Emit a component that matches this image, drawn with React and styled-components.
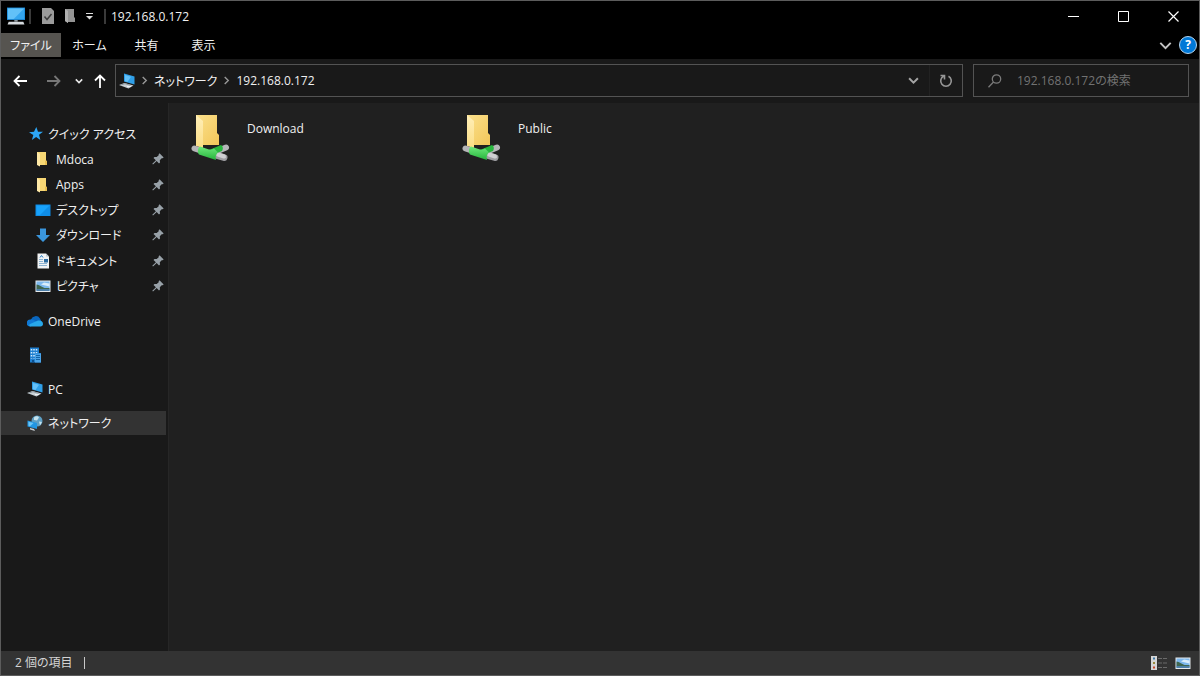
import React from 'react';
import styled, { createGlobalStyle } from 'styled-components';

const pinned = [
  { name: 'Mdoca', icon: 'folder' },
  { name: 'Apps', icon: 'folder' },
  { name: 'デスクトップ', icon: 'desktop' },
  { name: 'ダウンロード', icon: 'download' },
  { name: 'ドキュメント', icon: 'document' },
  { name: 'ピクチャ', icon: 'picture' },
];

const places = [
  { name: 'OneDrive', icon: 'cloud' },
  { name: '', label: '組織', icon: 'building' },
  { name: 'PC', icon: 'pc' },
  { name: 'ネットワーク', icon: 'network', selected: true },
];

const shares = ['Download', 'Public'];

const drawings = {
  folder: (
    <>
      <path d="M2 1h9v8.500l1 .5v4H2z" fill="#f7d774" />
      <path d="M10 9.500l2 .5v4h-2z" fill="#e9bf50" />
      <path d="M2 1l3 2v12.500L2 14z" fill="#ffe9a6" />
    </>
  ),
  desktop: (
    <>
      <path d="M.5 2.500h15v11.500H.5z" fill="#0f8de6" />
      <path d="M1.500 3.500h13L5 13H1.500z" fill="#18a2fb" />
    </>
  ),
  download: <path d="M5 1.500h6V8h4l-7 7-7-7h4z" fill="#3a96dd" />,
  document: (
    <>
      <path d="M2.500.5H11l3 3v12H2.500z" fill="#f1f3f4" />
      <path d="M11 .5v3h3z" fill="#b9c4cc" />
      <path d="M4 6.500h4M4 8.500h4M4 10.500h8M4 12.500h8" stroke="#8eb4d2" />
      <path d="M5 4.500l1.500-2 1.500 2" stroke="#1f7ac4" fill="none" />
      <path d="M9 6h4v3.500H9z" fill="#2b6da3" />
    </>
  ),
  picture: (
    <>
      <path d="M.5 2.500h15v11.500H.5z" fill="#e6eaed" />
      <path d="M1.500 3.500h13V13h-13z" fill="#7db8ee" />
      <path d="M6 6.500l3-2 5.500 1v3z" fill="#d9ecfb" />
      <path d="M1.500 6.500c3 0 5 2.500 8 3.500h5v1.500h-13z" fill="#3f6650" />
      <path d="M1.500 11h13v2h-13z" fill="#4d7fa8" />
    </>
  ),
  cloud: (
    <>
      <path d="M4 6.500a5 5 0 0 1 9-1l2 4.500H3z" fill="#0a66bd" />
      <path d="M3 13.500a3.500 3.500 0 0 1 .5-7c3-.5 5 1.500 8.500 4z" fill="#0f78d4" />
      <path d="M3 13.500c-1-.5-1-2 0-2.500l8-3.500c3-.5 5 1 5 3.500 0 1.500-1 2.500-2.500 2.500z" fill="#28a8ea" />
    </>
  ),
  building: (
    <>
      <path d="M3 .5h9V6h2v9.500H3z" fill="#1f7fd0" />
      <path d="M8 6.500h6v9H8z" fill="#4aa3e8" />
      <path d="M4.500 2v9.500M7 2v9.500M9.500 2v4" stroke="#d3ebfc" strokeWidth="1.500" strokeDasharray="1.500 1.500" />
      <path d="M9 8.500h4M9 10.500h4M9 12.500h4" stroke="#1362a6" />
      <path d="M5 13h2v2.500H5z" fill="#0d4f8c" />
    </>
  ),
  pc: (
    <>
      <path d="M5 .5L15.500 3.500v8L5 8.500z" fill="#2f9fe8" />
      <path d="M6 2l6 1.700L8.500 9 6 8.200z" fill="#63c0f8" />
      <path d="M0 12l5.500-2 9 2.500-5 3z" fill="#c9d1d6" />
      <path d="M2 12l4-1.300 5.500 1.600" stroke="#8b969d" fill="none" />
      <path d="M8 13.500h4" stroke="#eef1f3" />
    </>
  ),
  network: (
    <>
      <circle cx="10" cy="6" r="5.500" fill="#5e9fc4" />
      <path d="M7 2.500c2-2 4-1.500 5 0L10 5.500 7 5zM12 6.500l3 .5-2 3.500z" fill="#c6e3ee" />
      <path d="M.5 5.500l9.500 2.500v6L.5 11.500z" fill="#2196e3" />
      <path d="M1.500 6.700l5 1.300L3 11.300l-1.500-.5z" fill="#6ac6fa" />
      <path d="M3 13l4 1 1 2-5-1.500z" fill="#c6ced3" />
    </>
  ),
  monitor: (
    <>
      <path d="M0 .5h16v11H0z" fill="#1c8ede" />
      <path d="M.8 1.300h14.400v9.400H.8z" fill="#34a5ee" />
      <path d="M.8 1.300h14.400L6 10.700H.8z" fill="#62c1f8" />
      <path d="M6.500 11.500h3v1.500h-3z" fill="#8c979e" />
      <path d="M1.500 13h13l1 2.500H.5z" fill="#d5dade" />
    </>
  ),
};

const Icon = ({ name, size = 16 }) => (
  <svg width={size} height={size} viewBox="0 0 16 16" aria-hidden="true">
    {drawings[name]}
  </svg>
);

const Star = () => (
  <svg width="14" height="14" viewBox="0 0 14 14" aria-hidden="true">
    <path d="M7.300 0l1.700 4.700 5 .1-4 3 1.400 5.200-4.300-2.900-4.200 2.900 1.400-4.900L0 5.200l5-.4z" fill="#2da6f5" />
  </svg>
);

const Pin = () => (
  <svg width="12" height="12" viewBox="0 0 12 12" aria-hidden="true">
    <path d="M7.500.3l4.200 4.200-1.200.8-.8-.1-1.900 2 .2 2.200-1 1-2.300-2.400L1 11.500l-.7-.7 3.600-3.600L1.500 5l1-1.100 2.200.2 2-1.900-.1-.8z" fill="#98a1a8" />
  </svg>
);

const Chevron = ({ size = 10, right = false, color = '#9a9a9a', weight = 1.500 }) => (
  <svg width={size} height={size} viewBox="0 0 10 10" fill="none" stroke={color} strokeWidth={weight} aria-hidden="true">
    <path d={right ? 'M3 1l4 4-4 4' : 'M1 3l4 4 4-4'} />
  </svg>
);

const Arrow = ({ d, color = '#fff' }) => (
  <svg width="14" height="14" viewBox="0 0 14 14" fill="none" stroke={color} strokeWidth="1.800" aria-hidden="true">
    <path d={d} />
  </svg>
);

const SharedFolder = () => (
  <svg width="40" height="48" viewBox="0 0 40 48" aria-hidden="true">
    <defs>
      <linearGradient id="back" x1="0" y1="0" x2="1" y2="1">
        <stop offset="0" stopColor="#fbe08c" />
        <stop offset="1" stopColor="#f2c75a" />
      </linearGradient>
      <linearGradient id="front" x1="0" y1="0" x2="0" y2="1">
        <stop offset="0" stopColor="#ffefb8" />
        <stop offset="1" stopColor="#fbdd85" />
      </linearGradient>
      <linearGradient id="cable" x1="0" y1="0" x2="0" y2="1">
        <stop offset="0" stopColor="#6fe97c" />
        <stop offset="1" stopColor="#25b43c" />
      </linearGradient>
    </defs>
    <path d="M5 0h21v18l2 2v10H5z" fill="url(#back)" />
    <path d="M5 0l7 6v27l-7-2z" fill="url(#front)" />
    <g strokeLinecap="round" fill="none">
      <path d="M35 32.500l-6 2.500" stroke="#b5b5b8" strokeWidth="6" />
      <path d="M3.500 33.500l6 2" stroke="#b5b5b8" strokeWidth="6" />
      <path d="M33 42.500l-7-2" stroke="#9e9ea2" strokeWidth="7" />
      <path d="M33 41.500l-6-2" stroke="#cfcfd2" strokeWidth="4" />
    </g>
    <path d="M18 35l12-5c2 1 2.500 4 1 6l-10 4z" fill="#27b63d" />
    <path d="M9 31.500l9 3c2 .5 4-.5 5-1l4 4c-2 2-3 4-2 7.500L8 39.500c-2-2.500-1-7 1-8z" fill="url(#cable)" />
  </svg>
);

const App = () => {
  return (
    <Window>
      <GlobalStyle />
      <TitleBar>
        <QuickTools>
          <Icon name="monitor" size={18} />
          <Bar />
          <ToolButton aria-label="プロパティ">
            <svg width="12" height="16" viewBox="0 0 12 16" aria-hidden="true">
              <path d="M0 0h9l3 3v13H0z" fill="#9b9b9b" />
              <path d="M2.500 8.500l2.500 3L9.500 6" stroke="#3e3e3e" strokeWidth="1.500" fill="none" />
            </svg>
          </ToolButton>
          <ToolButton aria-label="新しいフォルダー">
            <svg width="10" height="14" viewBox="0 0 10 14" aria-hidden="true">
              <path d="M0 0h9v8l1 1v4H3v1L0 12z" fill="#949494" />
              <path d="M0 0l3 2v12l-3-2z" fill="#b0b0b0" />
            </svg>
          </ToolButton>
          <ToolButton aria-label="カスタマイズ">
            <svg width="7" height="7" viewBox="0 0 7 7" aria-hidden="true">
              <path d="M0 .5h7" stroke="#ddd" />
              <path d="M0 3h7L3.500 6.500z" fill="#ddd" />
            </svg>
          </ToolButton>
          <Bar />
        </QuickTools>
        <Title>192.168.0.172</Title>
        <CaptionButton aria-label="最小化">
          <svg width="11" height="11" viewBox="0 0 11 11" aria-hidden="true">
            <path d="M0 5.500h11" stroke="#fff" />
          </svg>
        </CaptionButton>
        <CaptionButton aria-label="最大化">
          <svg width="11" height="11" viewBox="0 0 11 11" aria-hidden="true">
            <path d="M.5.5h10v10H.5z" stroke="#fff" fill="none" />
          </svg>
        </CaptionButton>
        <CaptionButton aria-label="閉じる">
          <svg width="11" height="11" viewBox="0 0 11 11" aria-hidden="true">
            <path d="M.5.5l10 10M10.500.5l-10 10" stroke="#fff" strokeWidth="1.200" />
          </svg>
        </CaptionButton>
      </TitleBar>

      <Ribbon>
        <Tab $active>ファイル</Tab>
        <Tab>ホーム</Tab>
        <Tab>共有</Tab>
        <Tab>表示</Tab>
        <RibbonEnd>
          <ToolButton aria-label="リボンの展開">
            <Chevron size={13} color="#c4c4c4" />
          </ToolButton>
          <HelpButton aria-label="ヘルプ">?</HelpButton>
        </RibbonEnd>
      </Ribbon>

      <NavBar>
        <NavButtons>
          <ToolButton aria-label="戻る"><Arrow d="M14 7H1.500M6.500 2L1.500 7l5 5" /></ToolButton>
          <ToolButton aria-label="進む"><Arrow d="M0 7h12.500M7.500 2l5 5-5 5" color="#777" /></ToolButton>
          <ToolButton aria-label="最近の場所"><Chevron size={8} color="#e8e8e8" weight={2} /></ToolButton>
          <ToolButton aria-label="上へ"><Arrow d="M7 14V1.500M2 6.500l5-5 5 5" /></ToolButton>
        </NavButtons>
        <Address>
          <Icon name="pc" />
          <Chevron size={9} right />
          <Crumb>ネットワーク</Crumb>
          <Chevron size={9} right />
          <Crumb>192.168.0.172</Crumb>
          <AddressEnd>
            <AddressButton aria-label="以前の場所"><Chevron size={11} color="#a4a4a4" weight={1.800} /></AddressButton>
            <AddressButton $divided aria-label="最新の情報に更新">
              <svg width="14" height="14" viewBox="0 0 14 14" fill="none" stroke="#969696" strokeWidth="1.600" aria-hidden="true">
                <path d="M9.500 2.300a5.300 5.300 0 1 1-5 0M1.500 1.500h4v4" />
              </svg>
            </AddressButton>
          </AddressEnd>
        </Address>
        <Search>
          <svg width="14" height="14" viewBox="0 0 14 14" fill="none" stroke="#7a7a7a" strokeWidth="1.300" aria-hidden="true">
            <circle cx="8.500" cy="5" r="4.200" />
            <path d="M5.500 8L.5 13.300" />
          </svg>
          <SearchInput type="text" aria-label="検索" placeholder="192.168.0.172の検索" />
        </Search>
      </NavBar>

      <Body>
        <Sidebar>
          <QuickAccess>
            <Place href="#">
              <Star />
              <PlaceName>クイック アクセス</PlaceName>
            </Place>
            {pinned.map(({ name, icon }) => (
              <Place href="#" key={name} $nested>
                <Icon name={icon} />
                <PlaceName>{name}</PlaceName>
                <Pin />
              </Place>
            ))}
          </QuickAccess>
          {places.map(({ name, label, icon, selected }) => (
            <Place href="#" key={icon} aria-label={label} $selected={selected} $root>
              <Icon name={icon} />
              <PlaceName>{name}</PlaceName>
            </Place>
          ))}
        </Sidebar>
        <Content>
          {shares.map((name) => (
            <Share key={name}>
              <SharedFolder />
              <span>{name}</span>
            </Share>
          ))}
        </Content>
      </Body>

      <StatusBar>
        <Count>2 個の項目</Count>
        <ToolButton aria-label="詳細">
          <svg width="16" height="14" viewBox="0 0 16 14" aria-hidden="true">
            <path d="M0 0h6v14H0z" fill="#d6d6d6" />
            <path d="M2 2.500h2" stroke="#3c78a8" strokeWidth="2" />
            <path d="M2 7h2" stroke="#9a8a3c" strokeWidth="2" />
            <path d="M2 11.500h2" stroke="#c9472b" strokeWidth="2" />
            <path d="M7 2.500h9M7 7h9M7 11.500h9" stroke="#6b6b6b" strokeDasharray="4 1" />
          </svg>
        </ToolButton>
        <ToolButton aria-label="大アイコン"><Icon name="picture" /></ToolButton>
      </StatusBar>
    </Window>
  );
};

const GlobalStyle = createGlobalStyle`
  * {
    box-sizing: border-box;
  }
  body {
    margin: 0;
    background: #000;
  }
  body, button, input {
    font-family: 'Open Sans', 'Noto Sans CJK JP', sans-serif;
    font-size: 12px;
    font-feature-settings: 'palt';
  }
  svg {
    flex: none;
    display: block;
  }
  button {
    border: 0;
    padding: 0;
    background: none;
    color: inherit;
  }
`;

const Window = styled.div`
  display: flex;
  flex-direction: column;
  min-height: 100vh;
  border: 1px solid #5c5c5c;
  background: #191919;
  color: #f0f0f0;
`;

const TitleBar = styled.header`
  display: flex;
  align-items: center;
  height: 32px;
  padding: 0 1px 2px 0;
  background: #000;
`;

const QuickTools = styled.div`
  display: flex;
  align-items: center;
  gap: 11px;
  padding-left: 6px;

  svg:first-child + span {
    margin-left: -7px;
  }
`;

const Bar = styled.span`
  width: 2px;
  height: 15px;
  background: #3a3a3a;
`;

const Title = styled.h1`
  flex: 1;
  margin: 0;
  padding-left: 5px;
  font-size: 12px;
  font-weight: 400;
`;

const ToolButton = styled.button`
  display: flex;
  align-items: center;
  justify-content: center;
`;

const CaptionButton = styled(ToolButton)`
  width: 50px;
  height: 30px;
`;

const Ribbon = styled.div`
  display: flex;
  height: 26px;
  padding-bottom: 2px;
  background: #000;
`;

const Tab = styled.button`
  min-width: ${(props) => (props.$active ? '60px' : '57px')};
  background: ${(props) => (props.$active ? '#565450' : 'none')};
`;

const RibbonEnd = styled.div`
  display: flex;
  align-items: center;
  gap: 7px;
  margin-left: auto;
  padding-right: 2px;
`;

const HelpButton = styled.button`
  width: 18px;
  height: 18px;
  border: 1px solid #b4d4ee;
  border-radius: 50%;
  background: #0078d7;
  color: #fff;
  font-weight: 700;
  line-height: 16px;
`;

const NavBar = styled.div`
  display: flex;
  gap: 8px;
  padding: 5px 10px 6px 12px;
`;

const NavButtons = styled.div`
  display: flex;
  align-items: center;
  gap: 14px;

  button:first-child {
    margin-right: 6px;
  }
  button:last-child {
    margin-left: -4px;
  }
`;

const Address = styled.div`
  display: flex;
  align-items: center;
  flex: 1;
  gap: 5px;
  height: 33px;
  padding-left: 3px;
  border: 1px solid #535353;
`;

const Crumb = styled.button`
  white-space: nowrap;
`;

const AddressEnd = styled.div`
  display: flex;
  align-self: stretch;
  margin-left: auto;
`;

const AddressButton = styled(ToolButton)`
  width: 33px;
  border-left: 1px solid ${(props) => (props.$divided ? '#222' : 'transparent')};
`;

const Search = styled.label`
  display: flex;
  align-items: center;
  flex: 0 0 216px;
  gap: 15px;
  height: 33px;
  margin-left: 2px;
  padding-left: 14px;
  border: 1px solid #535353;
`;

const SearchInput = styled.input`
  flex: 1;
  min-width: 0;
  padding: 0;
  border: 0;
  outline: 0;
  background: none;
  color: #f0f0f0;

  &::placeholder {
    color: #727272;
    opacity: 1;
  }
`;

const Body = styled.div`
  display: flex;
  flex: 1;
`;

const Sidebar = styled.nav`
  display: flex;
  flex-direction: column;
  gap: 10px;
  width: 168px;
  padding: 18px 2px 0 0;
  border-right: 1px solid #262626;
`;

const QuickAccess = styled.div`
  display: grid;
  grid-auto-rows: 1fr;
  height: 178px;
`;

const Place = styled.a`
  display: flex;
  align-items: center;
  gap: 5px;
  min-height: 24px;
  padding: 0 2px 0 ${(props) => (props.$nested ? '34px' : props.$root ? '26px' : '28px')};
  background: ${(props) => (props.$selected ? '#333' : 'none')};
  color: inherit;
  text-decoration: none;
`;

const PlaceName = styled.span`
  flex: 1;
  white-space: nowrap;
`;

const Content = styled.main`
  display: grid;
  grid-template-columns: repeat(auto-fill, 271px);
  align-content: start;
  flex: 1;
  padding: 12px 0 0 22px;
  background: #202020;
`;

const Share = styled.button`
  display: flex;
  gap: 16px;
  text-align: left;
  line-height: 28px;
`;

const StatusBar = styled.footer`
  display: flex;
  align-items: center;
  gap: 8px;
  height: 24px;
  padding: 0 8px 0 14px;
  background: #333;
`;

const Count = styled.span`
  margin-right: auto;
  padding-right: 11px;
  border-right: 1px solid #c8c8c8;
  color: #d4d4d4;
  line-height: 12px;
`;

export default App;
